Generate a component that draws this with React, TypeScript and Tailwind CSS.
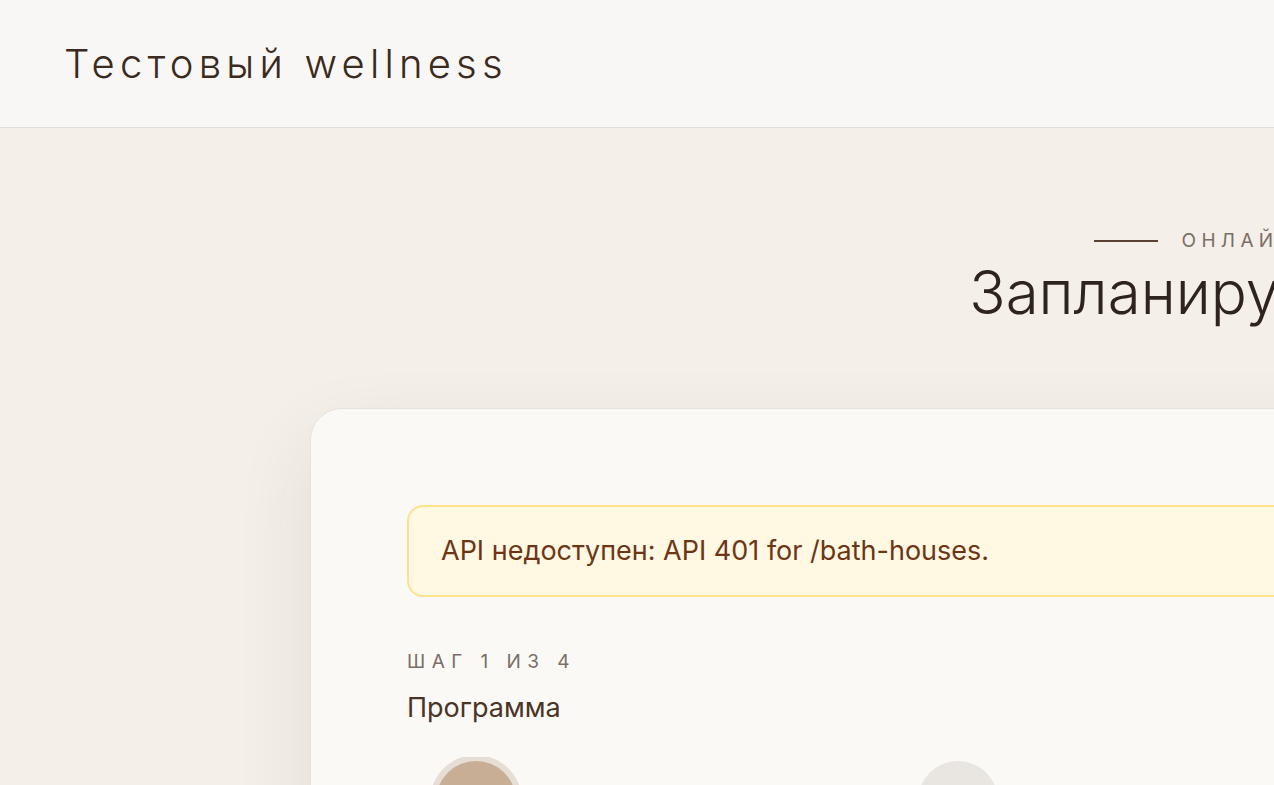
import React from 'react';

const steps = [
  { n: 1, label: 'Программа', active: true },
  { n: 2, label: 'Дата и время', active: false },
  { n: 3, label: 'Гости', active: false },
  { n: 4, label: 'Контакты', active: false },
];

const App: React.FC = () => {
  return (
    <div className="w-full h-screen overflow-hidden bg-[#f4efe9] font-['Inter','Noto_Sans',sans-serif]">
      <div className="w-[2520px]">
        <header className="h-32 flex items-center px-16 bg-[#f9f7f5] border-b border-[#e2ddd8]">
          <span className="text-[40px] font-light tracking-[0.13em] text-[#3a2a20]">Тестовый wellness</span>
        </header>

        <main className="pt-[99px] flex flex-col items-center">
          <div className="flex items-center gap-6 -ml-[4px]">
            <span className="w-16 h-[2px] bg-[#5a4232]" />
            <span className="text-[19px] tracking-[0.28em] text-[#7a6e66]">ОНЛАЙН-ЗАПИСЬ</span>
          </div>
          <h1 className="text-[60px] font-light leading-[1.2] text-[#2f241d]">Запланируйте визит</h1>

          <section className="mt-[80px] w-[1900px] rounded-[32px] bg-[#fbf9f6] border border-[#e8e2dc] shadow-[0_30px_80px_rgba(70,45,20,0.09)] p-24">
            <div className="rounded-2xl border-2 border-[#fde28c] bg-[#fff8e3] px-8 py-[28px] text-[27px] leading-[32px] text-[#6e3515]">
              API недоступен: API 401 for /bath-houses.
            </div>

            <div className="mt-[51px] text-[19px] tracking-[0.34em] text-[#7a6e66]">ШАГ 1 ИЗ 4</div>
            <h2 className="mt-3 text-[27px] text-[#4a3426]">Программа</h2>

            <div className="mt-[28px] pt-[3px] grid grid-cols-4 w-[1928px] overflow-hidden">
              {steps.map((s) => (
                <div key={s.n} className="flex flex-col items-start pl-[29px] pt-[1px]">
                  <div
                    className={
                      s.active
                        ? 'w-20 h-20 rounded-full bg-[#c8ae94] ring-[6px] ring-[#e6ddd4] flex items-center justify-center text-[26px] text-[#3a2a20]'
                        : 'w-20 h-20 rounded-full bg-[#e9e6e2] flex items-center justify-center text-[26px] text-[#8a817a]'
                    }
                  >
                    {s.n}
                  </div>
                  <span className="mt-4 text-lg text-[#4a3426]">{s.label}</span>
                </div>
              ))}
            </div>
          </section>
        </main>
      </div>
    </div>
  );
};

export default App;
